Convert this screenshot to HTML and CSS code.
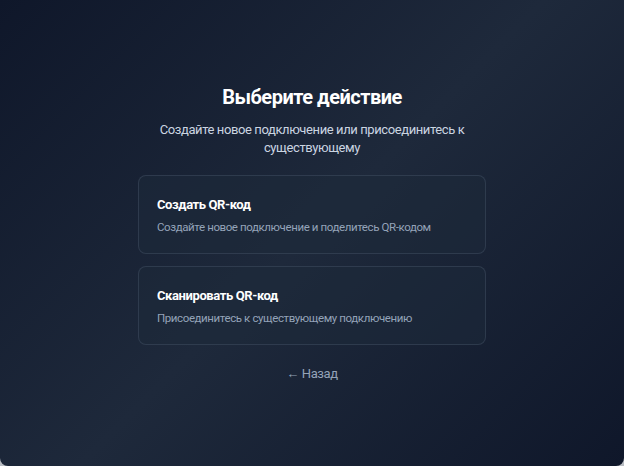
FILE: index.html
```html
<!DOCTYPE html>
<html lang="ru">
<head>
<meta charset="utf-8">
<link rel="stylesheet" href="styles.css">
</head>
<body>
<div class="frame">
  <main class="panel">
    <h1 class="title">Выберите действие</h1>
    <p class="subtitle">Создайте новое подключение или присоединитесь к существующему</p>
    <div class="options">
      <button class="card">
        <span class="card-title">Создать QR-код</span>
        <span class="card-desc">Создайте новое подключение и поделитесь QR-кодом</span>
      </button>
      <button class="card">
        <span class="card-title">Сканировать QR-код</span>
        <span class="card-desc">Присоединитесь к существующему подключению</span>
      </button>
    </div>
    <button class="back">← Назад</button>
  </main>
</div>
</body>
</html>
```
FILE: styles.css
```css
* { box-sizing: border-box; }
html, body { margin: 0; height: 100%; }
body {
  background: #b8bcc2;
  font-family: Roboto, "Noto Sans", sans-serif;
}
.frame {
  height: 466px;
  border-radius: 0 0 8px 8px;
  background: linear-gradient(135deg, #0f172a 0%, #1e293b 50%, #0f172a 100%);
  display: flex;
  align-items: center;
  justify-content: center;
}
.panel {
  width: 348px;
  display: flex;
  flex-direction: column;
  align-items: stretch;
  text-align: center;
  margin-top: 2px;
}
.title {
  margin: 0;
  font-size: 20px;
  line-height: 24px;
  font-weight: 700;
  letter-spacing: -0.5px;
  color: #ffffff;
}
.subtitle {
  margin: 12px 0 0;
  font-size: 13px;
  line-height: 18px;
  letter-spacing: -0.4px;
  color: #cbd5e1;
  padding: 0 8px;
}
.options {
  margin-top: 18px;
  display: flex;
  flex-direction: column;
  gap: 12px;
}
.card {
  display: flex;
  flex-direction: column;
  align-items: flex-start;
  gap: 5px;
  padding: 20px 18px 19px;
  height: 79px;
  background: rgba(30, 41, 59, 0.55);
  border: 1px solid rgba(71, 85, 105, 0.45);
  border-radius: 8px;
  font-family: inherit;
  text-align: left;
  cursor: pointer;
}
.card-title {
  font-size: 13px;
  line-height: 18px;
  font-weight: 700;
  letter-spacing: -0.4px;
  color: #ffffff;
}
.card-desc {
  font-size: 11.5px;
  line-height: 16px;
  letter-spacing: -0.4px;
  color: #94a3b8;
  white-space: nowrap;
}
.back {
  margin: 20px auto 0;
  background: none;
  border: 0;
  padding: 0;
  font-family: inherit;
  font-size: 13px;
  line-height: 18px;
  letter-spacing: -0.4px;
  color: #94a3b8;
  cursor: pointer;
}
```
